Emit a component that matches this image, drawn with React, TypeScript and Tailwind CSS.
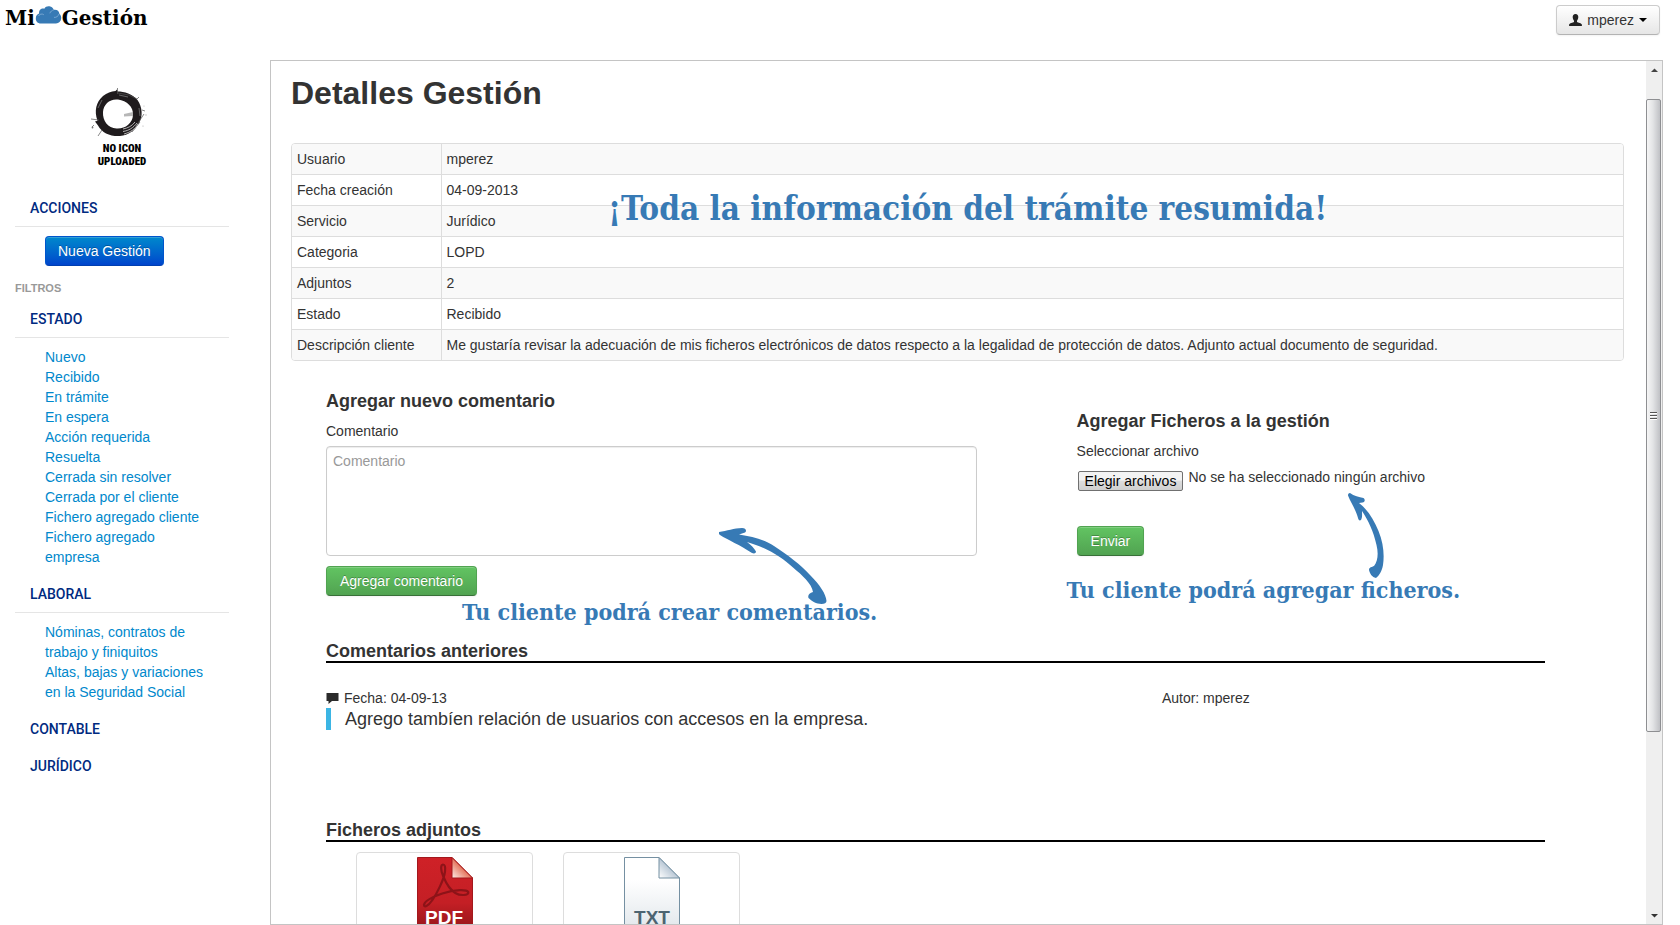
import type { ReactNode } from "react";

const estados = [
  "Nuevo",
  "Recibido",
  "En trámite",
  "En espera",
  "Acción requerida",
  "Resuelta",
  "Cerrada sin resolver",
  "Cerrada por el cliente",
  "Fichero agregado cliente",
  "Fichero agregado empresa",
];

const laboral = [
  "Nóminas, contratos de trabajo y finiquitos",
  "Altas, bajas y variaciones en la Seguridad Social",
];

const detalles = [
  ["Usuario", "mperez"],
  ["Fecha creación", "04-09-2013"],
  ["Servicio", "Jurídico"],
  ["Categoria", "LOPD"],
  ["Adjuntos", "2"],
  ["Estado", "Recibido"],
  [
    "Descripción cliente",
    "Me gustaría revisar la adecuación de mis ficheros electrónicos de datos respecto a la legalidad de protección de datos. Adjunto actual documento de seguridad.",
  ],
];

function CloudIcon() {
  return (
    <svg viewBox="0 0 27 20" className="h-5 w-[27px]" aria-hidden="true">
      <path
        d="M6 18.500C2.500 18.500.8 16.300.8 13.500c0-2.600 1.400-4.300 3.300-4.900C3.600 4.800 6.600 3 9.300 3.700 10.600 1.500 13 .8 15.300 1.600c1.800.6 2.900 1.700 3.400 3.200 3-.6 5.600 1 5.700 4 1.400 1.300 2 2.900 1.800 4.800-.3 3-2.300 4.900-5.200 4.900z"
        fill="#377ab5"
      />
      <path
        d="M3.500 11c1-1.900 3.500-2.600 5.300-1.300M18.700 5c-1.800.3-3.300 1.500-3.800 3.300M24 9c-.8 2.300-2.600 3.600-5 3.400"
        fill="none"
        stroke="#8fb8dc"
        strokeWidth=".7"
      />
    </svg>
  );
}

function BrushRing() {
  return (
    <svg viewBox="0 0 64 52" className="h-[52px] w-16" aria-hidden="true">
      <path
        d="M27 1.500l.5 2C34 3.500 43 6 47.500 12c5 7 5.500 16.500 1.500 23-4 7-10.500 12.500-19 13C20 48.500 12 45 8 37.500l-3-4 2.500-.8C4 23 6 14 13 8 17 5 21 3.500 25.500 3zM28 11.500C20 10.500 13.500 16 13 24c-.5 9 5 16 13.500 16.500 8.500.6 16-5 16.500-13.500C43.500 19 37 12.500 28 11.500z"
        fill="#1f1b1d"
      />
      <path
        d="M27.500 0v6M28 5l11 2 8 4 2-2M9 32l-8-1M4 37l-2 2M52 22l3 1M46 38l8-12M42 44l8-10M12 42l-4 6"
        stroke="#555"
        strokeWidth=".7"
        fill="none"
      />
      <path
        d="M33 41c5-1 9-3 12-7M33 43.500c6-1 10-3.500 14-8.500M34 46c7-2 11-5 14-10"
        stroke="#d8d8d8"
        strokeWidth=".8"
        fill="none"
      />
      <path d="M34 26l9-2v4l-9 .5z" fill="#999" opacity=".7" />
      <path d="M29 7l9 2M12 12l-4 8M49 20l1 8" stroke="#777" strokeWidth=".8" />
      <circle cx="2.500" cy="39.500" r=".9" fill="#777" />
      <circle cx="54" cy="18" r=".6" fill="#bbb" />
      <circle cx="56" cy="27" r=".7" fill="#bbb" />
      <circle cx="53" cy="38" r=".6" fill="#aaa" />
    </svg>
  );
}

function UserIcon() {
  return (
    <svg viewBox="0 0 13 12" className="h-3 w-[13px]" aria-hidden="true">
      <path
        d="M6.500 0C8.400 0 9.400 1.300 9.300 3.300 9.200 4.900 8.600 6 8 6.700v1.200c1 .7 4.600 1.200 4.900 2.700V12H.1v-1.400C.4 9.100 4 8.600 5 7.900V6.700C4.400 6 3.800 4.900 3.700 3.300 3.600 1.300 4.600 0 6.500 0z"
        fill="#222"
      />
    </svg>
  );
}

function CommentIcon() {
  return (
    <svg viewBox="0 0 13 11" className="h-[11px] w-[13px]" aria-hidden="true">
      <path d="M.5 0h12v8H6L2.500 11V8h-2z" fill="#2b2b2b" />
    </svg>
  );
}

function PdfIcon() {
  return (
    <svg viewBox="0 0 56 76" className="h-[76px] w-14" role="img" aria-label="Documento PDF">
      <defs>
        <linearGradient id="pdfBody" x1="0" y1="0" x2="0" y2="1">
          <stop offset="0" stopColor="#cf2127" />
          <stop offset=".6" stopColor="#c41f25" />
          <stop offset="1" stopColor="#8f1519" />
        </linearGradient>
        <linearGradient id="pdfFold" x1="1" y1="0" x2="0" y2="1">
          <stop offset=".45" stopColor="#e2694f" />
          <stop offset="1" stopColor="#fdeee8" />
        </linearGradient>
      </defs>
      <path d="M.5.5H35L55.500 21v55H.5z" fill="url(#pdfBody)" stroke="#a3181d" />
      <path d="M35 .5L55.500 21H35z" fill="url(#pdfFold)" stroke="#a3181d" />
      <path
        d="M26 7.500c-2.500 0-2.500 6 .3 12 2.500 6 7 13.500 12 16.500 5 3 13 2.500 13-.5 0-3.500-14-3-26 1C15 40 7.500 44.500 7 48c0 2.500 4 1.500 8-4.500 5-7 12-21 13-29 .6-4.500-.2-7-2-7z"
        fill="none"
        stroke="#8d1318"
        strokeWidth="2.200"
      />
      <text x="27" y="67" textAnchor="middle" fontFamily="Liberation Sans, sans-serif" fontWeight="700" fontSize="19" fill="#fff">
        PDF
      </text>
    </svg>
  );
}

function TxtIcon() {
  return (
    <svg viewBox="0 0 56 76" className="h-[76px] w-14" role="img" aria-label="Documento TXT">
      <defs>
        <linearGradient id="txtBody" x1="0" y1="0" x2="0" y2="1">
          <stop offset=".3" stopColor="#fff" />
          <stop offset="1" stopColor="#dfe5ea" />
        </linearGradient>
        <linearGradient id="txtFold" x1="1" y1="0" x2="0" y2="1">
          <stop offset=".45" stopColor="#b3c3d2" />
          <stop offset="1" stopColor="#fff" />
        </linearGradient>
      </defs>
      <path d="M.5.5H35L55.500 21v55H.5z" fill="url(#txtBody)" stroke="#7590a2" />
      <path d="M35 .5L55.500 21H35z" fill="url(#txtFold)" stroke="#7590a2" />
      <text x="28" y="67" textAnchor="middle" fontFamily="Liberation Sans, sans-serif" fontWeight="700" fontSize="19" fill="#4c6471">
        TXT
      </text>
    </svg>
  );
}

function NavHeading({ children }: { children: ReactNode }) {
  return (
    <h3 className="pl-[15px] font-['Roboto',sans-serif] text-sm/5 font-medium text-[#002a80]">
      <a href="#">{children}</a>
    </h3>
  );
}

function NavList({ items }: { items: string[] }) {
  return (
    <ul className="mt-2 border-t border-[#e5e5e5] pt-[9px] pr-5 pl-[30px]">
      {items.map((item) => (
        <li key={item}>
          <a href="#" className="text-[#0088cc]">
            {item}
          </a>
        </li>
      ))}
    </ul>
  );
}

function SuccessButton({ children }: { children: ReactNode }) {
  return (
    <button
      type="button"
      className="h-[30px] rounded border border-[#51a351] border-b-[#387038] bg-linear-to-b from-[#62c462] to-[#51a351] px-[13px] text-white shadow-[inset_0_1px_0_rgba(255,255,255,0.2),0_1px_2px_rgba(0,0,0,0.05)] text-shadow-[0_-1px_0_rgba(0,0,0,0.25)]"
    >
      {children}
    </button>
  );
}

function SectionHeading({ children }: { children: ReactNode }) {
  return <h3 className="border-b-2 border-black text-lg/5 font-bold">{children}</h3>;
}

function ScrollBar() {
  return (
    <div className="flex w-4 shrink-0 flex-col bg-[#efefef]" aria-hidden="true">
      <svg viewBox="0 0 16 38" className="h-[38px] w-4 shrink-0">
        <path d="M5 11l3.500-3.500L12 11z" fill="#444" />
      </svg>
      <div className="mr-px flex h-[73.3%] items-center justify-center rounded-xs border border-[#8e8f92] bg-linear-to-r from-[#f6f6f6] via-[#e3e4e6] via-45% to-[#c0c1c5]">
        <svg viewBox="0 0 8 9" className="h-[9px] w-2">
          <path d="M0 1.500h7M0 4.500h7M0 7.500h7" stroke="#555" />
          <path d="M0 2.500h7M0 5.500h7M0 8.500h7" stroke="#fff" />
        </svg>
      </div>
      <svg viewBox="0 0 16 16" className="mt-auto h-4 w-4 shrink-0">
        <path d="M5 6h7L8.500 9.500z" fill="#333" />
      </svg>
    </div>
  );
}

function Sidebar() {
  return (
    <nav className="w-[270px] shrink-0 pr-[41px] pl-[15px]">
      <div className="flex flex-col items-center pt-7">
        <BrushRing />
        <p className="mt-0.5 text-center font-['Roboto_Condensed','Roboto',sans-serif] text-[11px]/[13px] font-black text-black">
          NO ICON
          <br />
          UPLOADED
        </p>
      </div>
      <div className="mt-[30px]">
        <NavHeading>ACCIONES</NavHeading>
        <div className="mt-2 border-t border-[#e5e5e5] pt-[9px] pl-[30px]">
          <button
            type="button"
            className="h-[30px] rounded border border-[#0055cc] border-b-[#003fb0] bg-linear-to-b from-[#0088cc] to-[#0044cc] px-3 text-white shadow-[inset_0_1px_0_rgba(255,255,255,0.2)] text-shadow-[0_-1px_0_rgba(0,0,0,0.25)]"
          >
            Nueva Gestión
          </button>
        </div>
      </div>
      <h2 className="mt-3 text-[11px]/5 font-bold text-[#999999]">FILTROS</h2>
      <div className="mt-[11px] flex flex-col gap-[17px]">
        <div>
          <NavHeading>ESTADO</NavHeading>
          <NavList items={estados} />
        </div>
        <div>
          <NavHeading>LABORAL</NavHeading>
          <NavList items={laboral} />
        </div>
        <NavHeading>CONTABLE</NavHeading>
        <NavHeading>JURÍDICO</NavHeading>
      </div>
    </nav>
  );
}

export default function App() {
  return (
    <div className="flex h-screen flex-col overflow-hidden bg-white font-['Liberation_Sans',sans-serif] text-sm/5 text-[#333333]">
      <header className="flex h-15 shrink-0 items-start justify-between pt-[5px] pr-5 pl-[5px]">
        <a
          href="#"
          className="flex items-start font-['DejaVu_Serif',serif] text-[20px]/[26px] font-bold text-black"
        >
          Mi
          <CloudIcon />
          Gestión
        </a>
        <button
          type="button"
          className="flex h-[30px] items-center gap-[5px] rounded border border-[#cccccc] border-b-[#b3b3b3] bg-linear-to-b from-white to-[#e6e6e6] px-3 shadow-[inset_0_1px_0_rgba(255,255,255,0.2),0_1px_2px_rgba(0,0,0,0.05)]"
        >
          <UserIcon />
          mperez
          <svg viewBox="0 0 8 4" className="h-1 w-2" aria-hidden="true">
            <path d="M0 0h8L4 4z" fill="#000" />
          </svg>
        </button>
      </header>

      <div className="flex min-h-0 flex-1 pr-[17px]">
        <Sidebar />

        <div className="flex min-w-0 flex-1 border border-[#c4c4c4]">
          <main className="min-w-0 flex-1 overflow-hidden pt-3 pr-[22px] pl-5">
            <h1 className="text-[32px]/10 font-bold">Detalles Gestión</h1>

            <div className="relative mt-[30px]">
              <div className="overflow-hidden rounded border border-[#dddddd]">
                <table className="w-full text-left">
                  <tbody>
                    {detalles.map(([nombre, valor]) => (
                      <tr key={nombre} className="border-[#dddddd] odd:bg-[#f9f9f9] not-first:border-t">
                        <th scope="row" className="w-[149px] p-[5px] font-normal">
                          {nombre}
                        </th>
                        <td className="border-l border-[#dddddd] p-[5px]">{valor}</td>
                      </tr>
                    ))}
                  </tbody>
                </table>
              </div>
              <p className="absolute top-[46px] left-[317px] font-['DejaVu_Serif_Condensed',serif] text-[33px]/10 font-bold whitespace-nowrap text-[#377ab5]">
                ¡Toda la información del trámite resumida!
              </p>
            </div>

            <div className="mt-[30px] mr-[79px] ml-[35px]">
              <div className="grid grid-cols-[25fr_18fr] gap-x-25">
                <section className="relative">
                  <h3 className="text-lg/5 font-bold">Agregar nuevo comentario</h3>
                  <label htmlFor="comentario" className="mt-2.5 block">
                    Comentario
                  </label>
                  <textarea
                    id="comentario"
                    placeholder="Comentario"
                    className="mt-[5px] block h-[110px] w-full resize-none rounded border border-[#cccccc] px-1.5 py-1 shadow-[inset_0_1px_1px_rgba(0,0,0,0.075)] placeholder:text-[#999999]"
                  />
                  <div className="mt-2.5">
                    <SuccessButton>Agregar comentario</SuccessButton>
                  </div>
                  <svg
                    viewBox="0 0 108 76"
                    className="absolute top-[137px] left-[393px] h-[76px] w-[108px]"
                    aria-hidden="true"
                  >
                    <path
                      d="M0 4C8 3 15 0 23 0c4 0 5 3 3 4.500L20 6.500C34 8.500 46 12 55 18c14 9 27 19 36 29 10 10 16 19 16.500 26 0 2-2 3-5 3-5 0-10-3-13-6-1-3 1-5 4.500-6C93 56 83 47 74 39.500 63 29.500 49 20 28 14c4 3 7 6 9 9.500 0 2-2 2.500-4 1.500C21 17 9 12 1 7 0 6-.5 5 0 4z"
                      fill="#377ab5"
                    />
                  </svg>
                  <p className="absolute top-[207px] left-[136px] font-['DejaVu_Serif_Condensed',serif] text-[23px]/[28px] font-bold whitespace-nowrap text-[#377ab5]">
                    Tu cliente podrá crear comentarios.
                  </p>
                </section>

                <section className="relative pt-5">
                  <h3 className="text-lg/5 font-bold">Agregar Ficheros a la gestión</h3>
                  <p className="mt-2.5">Seleccionar archivo</p>
                  <div className="mt-1.5 flex items-start gap-[5px]">
                    <label
                      htmlFor="archivos"
                      className="mt-1 ml-px flex h-5 items-center rounded-xs border border-[#707070] bg-linear-to-b from-[#f3f3f3] from-45% via-[#dddddd] via-50% to-[#cfcfcf] px-1.5 text-black"
                    >
                      Elegir archivos
                    </label>
                    <input id="archivos" type="file" multiple className="sr-only" />
                    <span>No se ha seleccionado ningún archivo</span>
                  </div>
                  <div className="mt-[35px]">
                    <SuccessButton>Enviar</SuccessButton>
                  </div>
                  <svg
                    viewBox="0 0 37 86"
                    className="absolute top-[102px] left-[271px] h-[86px] w-[37px]"
                    aria-hidden="true"
                  >
                    <path
                      d="M2 0C6 3 11 4 15.500 5c2 1.500 1.500 4-1 4.500L11 10c9 7 15 17 19.500 28 5 12 6 24 4.500 34-1 6-4 11-7 13-4-1-6-4-7-8 0-3 3-3 5-4 4-5 4.500-13 2.500-21C25.500 38 20 27 14 18c0 4 .5 6-1 9-1.500 1-2.500 0-3-2C8 17 3 10 0 2.500 0 1 .5 0 2 0z"
                      fill="#377ab5"
                    />
                  </svg>
                  <p className="absolute top-[185px] -left-2.5 font-['DejaVu_Serif_Condensed',serif] text-[23px]/[28px] font-bold whitespace-nowrap text-[#377ab5]">
                    Tu cliente podrá agregar ficheros.
                  </p>
                </section>
              </div>

              <section className="mt-[45px]">
                <SectionHeading>Comentarios anteriores</SectionHeading>
                <div className="mt-[25px] grid grid-cols-[24fr_11fr]">
                  <p className="flex items-center gap-[5px]">
                    <CommentIcon />
                    Fecha: 04-09-13
                  </p>
                  <p>Autor: mperez</p>
                </div>
                <blockquote className="border-l-5 border-[#3bb5e4] pl-[14px] text-lg/[22px]">
                  Agrego tambíen relación de usuarios con accesos en la empresa.
                </blockquote>
              </section>

              <section className="mt-[90px]">
                <SectionHeading>Ficheros adjuntos</SectionHeading>
                <div className="mt-2.5 ml-[30px] flex gap-[30px]">
                  <a href="#" className="flex h-[130px] w-[177px] justify-center rounded border border-[#dddddd] pt-1">
                    <PdfIcon />
                  </a>
                  <a href="#" className="flex h-[130px] w-[177px] justify-center rounded border border-[#dddddd] pt-1">
                    <TxtIcon />
                  </a>
                </div>
              </section>
            </div>
          </main>
          <ScrollBar />
        </div>
      </div>
    </div>
  );
}
